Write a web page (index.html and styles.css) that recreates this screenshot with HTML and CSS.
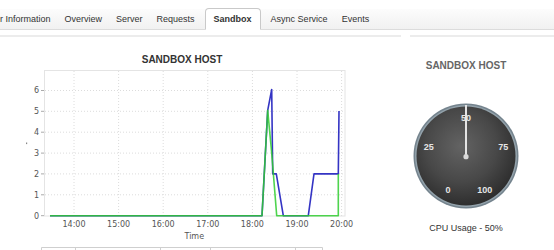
FILE: index.html
```html
<!DOCTYPE html>
<html lang="en">
<head>
  <meta charset="UTF-8">
  <title>Sandbox</title>
  <link rel="stylesheet" href="styles.css">
</head>
<body>
  <div class="tabs">
    <ul class="tab-list">
      <li class="tab">User Information</li>
      <li class="tab">Overview</li>
      <li class="tab">Server</li>
      <li class="tab">Requests</li>
      <li class="tab active">Sandbox</li>
      <li class="tab">Async Service</li>
      <li class="tab">Events</li>
    </ul>
  </div>

  <div class="panels">
    <div class="panel chart-panel">
      <svg class="chart" width="401" height="213" viewBox="0 37 401 213">
        <text class="chart-title" x="182" y="62.7" text-anchor="middle">SANDBOX HOST</text>

        <!-- plot frame -->
        <rect class="plot-frame" x="44.5" y="70.5" width="300.5" height="145.5"/>

        <!-- grid -->
        <g class="grid">
          <line x1="45" y1="194.8" x2="345" y2="194.8"/>
          <line x1="45" y1="173.9" x2="345" y2="173.9"/>
          <line x1="45" y1="153.1" x2="345" y2="153.1"/>
          <line x1="45" y1="132.2" x2="345" y2="132.2"/>
          <line x1="45" y1="111.3" x2="345" y2="111.3"/>
          <line x1="45" y1="90.5" x2="345" y2="90.5"/>
          <line x1="74" y1="71" x2="74" y2="216"/>
          <line x1="118.6" y1="71" x2="118.6" y2="216"/>
          <line x1="163.2" y1="71" x2="163.2" y2="216"/>
          <line x1="207.8" y1="71" x2="207.8" y2="216"/>
          <line x1="252.4" y1="71" x2="252.4" y2="216"/>
          <line x1="297" y1="71" x2="297" y2="216"/>
          <line x1="341.6" y1="71" x2="341.6" y2="216"/>
        </g>

        <!-- y axis -->
        <g class="ticks">
          <line x1="41" y1="215.7" x2="44" y2="215.7"/>
          <line x1="41" y1="194.8" x2="44" y2="194.8"/>
          <line x1="41" y1="173.9" x2="44" y2="173.9"/>
          <line x1="41" y1="153.1" x2="44" y2="153.1"/>
          <line x1="41" y1="132.2" x2="44" y2="132.2"/>
          <line x1="41" y1="111.3" x2="44" y2="111.3"/>
          <line x1="41" y1="90.5" x2="44" y2="90.5"/>
        </g>
        <g class="axis-label" text-anchor="end">
          <text x="39" y="218.6">0</text>
          <text x="39" y="197.7">1</text>
          <text x="39" y="176.8">2</text>
          <text x="39" y="156">3</text>
          <text x="39" y="135.1">4</text>
          <text x="39" y="114.2">5</text>
          <text x="39" y="93.4">6</text>
        </g>
        <rect class="y-title" x="26" y="142.5" width="1.2" height="1.6"/>

        <!-- x axis -->
        <g class="axis-label" text-anchor="middle">
          <text x="74" y="226.5">14:00</text>
          <text x="118.6" y="226.5">15:00</text>
          <text x="163.2" y="226.5">16:00</text>
          <text x="207.8" y="226.5">17:00</text>
          <text x="252.4" y="226.5">18:00</text>
          <text x="297" y="226.5">19:00</text>
          <text x="341.6" y="226.5">20:00</text>
          <text x="194.3" y="239">Time</text>
        </g>

        <!-- series -->
        <polyline class="line-blue" points="50,215.7 262,215.7 267.7,110.4 271.7,89.5 272.7,173.9 276.3,173.9 283.3,215.7 308.3,215.7 314,173.9 338.3,173.9 339,111"/>
        <polyline class="line-green" points="50,215.7 262,215.7 267.7,110.4 271.7,153 276.7,215.7 338.3,215.7 338.3,174"/>

        <!-- navigator -->
        <path class="navigator" d="M41.5 250 V247.5 H322.5 V250 M75.5 247.5 V250 M160.5 247.5 V250 M210.5 247.5 V250 M295.5 247.5 V250"/>
      </svg>
    </div>

    <div class="panel gauge-panel">
      <h3 class="gauge-title">SANDBOX HOST</h3>
      <svg class="gauge" width="112" height="112" viewBox="0 0 112 112">
        <defs>
          <radialGradient id="face" cx="45%" cy="40%" r="60%">
            <stop offset="0" stop-color="#636363"/>
            <stop offset="0.6" stop-color="#484848"/>
            <stop offset="1" stop-color="#2e2e2e"/>
          </radialGradient>
        </defs>
        <circle cx="56" cy="56" r="52.5" fill="#74838d"/>
        <circle cx="56" cy="56" r="51" fill="#93a2ab"/>
        <circle cx="56" cy="56" r="49.5" fill="url(#face)"/>
        <g class="gauge-label" text-anchor="middle">
          <text x="56" y="21.3">50</text>
          <text x="18.7" y="50">25</text>
          <text x="93.3" y="50.2">75</text>
          <text x="38" y="92.5">0</text>
          <text x="74.8" y="92.5">100</text>
        </g>
        <line class="needle" x1="56" y1="5" x2="56" y2="56"/>
        <circle cx="56" cy="56.7" r="2.6" fill="#d8d8d8"/>
      </svg>
      <p class="gauge-caption">CPU Usage - 50%</p>
    </div>
  </div>
</body>
</html>
```

FILE: styles.css
```css
html, body {
  margin: 0;
  padding: 0;
  background: #fff;
  overflow: hidden;
}
body {
  width: 554px;
  height: 250px;
  font-family: "Liberation Sans", Arial, sans-serif;
  color: #333;
}
.tabs {
  margin-top: 9px;
  height: 20px;
  background: linear-gradient(#fcfcfc, #f1f1f1);
  border-bottom: 1px solid #dcdcdc;
}
.tab-list {
  display: flex;
  align-items: flex-end;
  height: 100%;
  margin: 0 0 0 -23px;
  padding: 0;
  list-style: none;
  white-space: nowrap;
}
.tab {
  padding: 0 7px;
  font-size: 9px;
  line-height: 20px;
  color: #333;
}
.tab.active {
  margin: 0 3px -1px;
  padding: 0 8px;
  line-height: 20px;
  background: #fff;
  border: 1px solid #c9c9c9;
  border-bottom-color: #fff;
  border-radius: 4px 4px 0 0;
  font-weight: bold;
}
.panels {
  display: flex;
  margin-top: 5px;
}
.panel {
  border-top: 2px solid #ececec;
}
.chart-panel {
  width: 401px;
}
.chart {
  display: block;
}
.chart-title {
  font-family: "Liberation Sans", Arial, sans-serif;
  font-size: 10px;
  font-weight: bold;
  fill: #333;
}
.plot-frame {
  fill: none;
  stroke: #e4e4e4;
  stroke-width: 1;
}
.grid line {
  stroke: #dcdcdc;
  stroke-width: 1;
  stroke-dasharray: 1 2;
}
.ticks line {
  stroke: #aaa;
  stroke-width: 1;
}
.axis-label {
  font-family: "DejaVu Sans", Verdana, sans-serif;
  font-size: 8px;
  fill: #555;
}
.y-title {
  fill: #888;
}
.line-blue {
  fill: none;
  stroke: #3434c4;
  stroke-width: 1.6;
  stroke-linejoin: round;
}
.line-green {
  fill: none;
  stroke: #2fcc2f;
  stroke-width: 1.6;
  stroke-linejoin: round;
  opacity: 0.85;
}
.navigator {
  fill: none;
  stroke: #cfcfcf;
  stroke-width: 1;
}
.gauge-panel {
  flex: 1;
  display: flex;
  flex-direction: column;
  align-items: center;
  margin-left: 9px;
  padding-right: 32px;
}
.gauge-title {
  margin: 23px 0 0;
  font-size: 10px;
  line-height: 12px;
  font-weight: bold;
  color: #666;
}
.gauge {
  display: block;
  margin-top: 28px;
}
.gauge-label {
  font-family: "Liberation Sans", Arial, sans-serif;
  font-size: 9px;
  font-weight: bold;
  fill: #e6e6e6;
}
.needle {
  stroke: #e4e4e4;
  stroke-width: 2;
}
.gauge-caption {
  margin: 11px 0 0;
  font-size: 9px;
  line-height: 11px;
  color: #333;
  white-space: nowrap;
}
```
